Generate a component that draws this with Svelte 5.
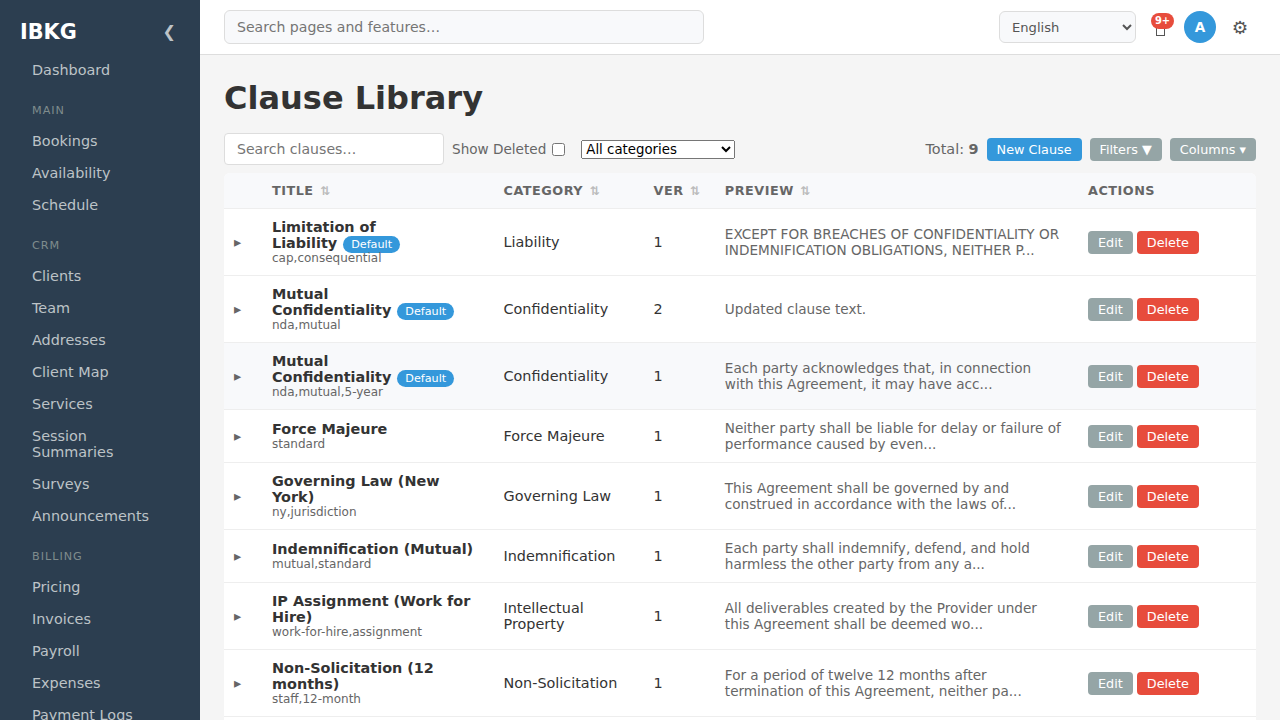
<script lang="ts">
    type Clause = {
        title: string
        tags: string
        category: string
        version: number
        preview: string
        isDefault?: boolean
        active?: boolean
    }

    const navGroups = [
        { label: '', items: ['Dashboard'] },
        { label: 'Main', items: ['Bookings', 'Availability', 'Schedule'] },
        {
            label: 'CRM',
            items: ['Clients', 'Team', 'Addresses', 'Client Map', 'Services', 'Session Summaries', 'Surveys', 'Announcements']
        },
        { label: 'Billing', items: ['Pricing', 'Invoices', 'Payroll', 'Expenses', 'Payment Logs'] }
    ]

    const columns = ['Title', 'Category', 'Ver', 'Preview']

    const clauses: Clause[] = [
        { title: 'Limitation of Liability', tags: 'cap,consequential', category: 'Liability', version: 1, preview: 'EXCEPT FOR BREACHES OF CONFIDENTIALITY OR INDEMNIFICATION OBLIGATIONS, NEITHER P...', isDefault: true },
        { title: 'Mutual Confidentiality', tags: 'nda,mutual', category: 'Confidentiality', version: 2, preview: 'Updated clause text.', isDefault: true },
        { title: 'Mutual Confidentiality', tags: 'nda,mutual,5-year', category: 'Confidentiality', version: 1, preview: 'Each party acknowledges that, in connection with this Agreement, it may have acc...', isDefault: true, active: true },
        { title: 'Force Majeure', tags: 'standard', category: 'Force Majeure', version: 1, preview: 'Neither party shall be liable for delay or failure of performance caused by even...' },
        { title: 'Governing Law (New York)', tags: 'ny,jurisdiction', category: 'Governing Law', version: 1, preview: 'This Agreement shall be governed by and construed in accordance with the laws of...' },
        { title: 'Indemnification (Mutual)', tags: 'mutual,standard', category: 'Indemnification', version: 1, preview: 'Each party shall indemnify, defend, and hold harmless the other party from any a...' },
        { title: 'IP Assignment (Work for Hire)', tags: 'work-for-hire,assignment', category: 'Intellectual Property', version: 1, preview: 'All deliverables created by the Provider under this Agreement shall be deemed wo...' },
        { title: 'Non-Solicitation (12 months)', tags: 'staff,12-month', category: 'Non-Solicitation', version: 1, preview: 'For a period of twelve 12 months after termination of this Agreement, neither pa...' }
    ]

    let search = $state('')
    let showDeleted = $state(false)
</script>

<div class="layout">
    <aside class="sidebar">
        <div class="brand">
            <span class="logo">IBKG</span>
            <button class="collapse" aria-label="Collapse sidebar">❮</button>
        </div>
        <nav>
            {#each navGroups as group}
                {#if group.label}
                    <div class="nav-label">{group.label}</div>
                {/if}
                {#each group.items as item}
                    <a class="nav-item" href="#top">{item}</a>
                {/each}
            {/each}
        </nav>
    </aside>

    <div class="content">
        <header class="topbar">
            <input class="global-search" type="text" placeholder="Search pages and features…" />
            <div class="topbar-right">
                <select class="language" aria-label="Language">
                    <option>English</option>
                </select>
                <button class="icon-btn bell" aria-label="Notifications">
                    <svg width="9" height="14" viewBox="0 0 9 14">
                        <rect x="0.5" y="0.5" width="8" height="13" fill="none" stroke="currentColor" />
                    </svg>
                    <span class="count">9+</span>
                </button>
                <div class="avatar">A</div>
                <button class="icon-btn gear" aria-label="Settings">⚙</button>
            </div>
        </header>

        <main>
            <h1>Clause Library</h1>

            <div class="toolbar">
                <input class="search" type="text" placeholder="Search clauses…" bind:value={search} />
                <label class="deleted">Show Deleted <input type="checkbox" bind:checked={showDeleted} /></label>
                <select class="category" aria-label="Category">
                    <option>All categories</option>
                </select>
                <span class="total">Total: <strong>9</strong></span>
                <button class="btn primary">New Clause</button>
                <button class="btn">Filters ▼</button>
                <button class="btn">Columns ▾</button>
            </div>

            <div class="table-wrap">
                <table>
                    <colgroup>
                        <col class="col-expand" />
                        <col class="col-title" />
                        <col class="col-category" />
                        <col class="col-version" />
                        <col class="col-preview" />
                        <col />
                    </colgroup>
                    <thead>
                        <tr>
                            <th></th>
                            {#each columns as column}
                                <th>{column} <span class="sort">⇅</span></th>
                            {/each}
                            <th>Actions</th>
                        </tr>
                    </thead>
                    <tbody>
                        {#each clauses as clause}
                            <tr class:active={clause.active}>
                                <td class="expand">▸</td>
                                <td>
                                    <strong>{clause.title}</strong>{#if clause.isDefault}<span class="badge">Default</span>{/if}
                                    <div class="tags">{clause.tags}</div>
                                </td>
                                <td>{clause.category}</td>
                                <td>{clause.version}</td>
                                <td class="preview">{clause.preview}</td>
                                <td>
                                    <div class="actions">
                                        <button class="btn">Edit</button>
                                        <button class="btn danger">Delete</button>
                                    </div>
                                </td>
                            </tr>
                        {/each}
                    </tbody>
                </table>
            </div>
        </main>
    </div>
</div>

<style>
    :global(body) {
        overflow: hidden;
        background: #f5f5f5;
        color: #333;
        font-family: 'DejaVu Sans', sans-serif;
    }

    .layout {
        display: flex;
        height: 100vh;
        overflow: hidden;
    }

    .layout * {
        box-sizing: border-box;
    }

    button, input, select {
        font-family: inherit;
    }

    .sidebar {
        flex: 0 0 200px;
        background: #2c3e50;
        overflow: hidden;
    }

    .brand {
        display: flex;
        align-items: center;
        justify-content: space-between;
        height: 54px;
        padding: 10px 20px 0;
    }

    .logo {
        color: #fff;
        font-size: 20.8px;
        font-weight: bold;
    }

    .collapse {
        padding: 3px 4px 5px;
        border: none;
        background: none;
        color: #bdc3c7;
        font-size: 16px;
    }

    .nav-label {
        padding: 18px 32px 8px;
        color: #7f8c8d;
        font-size: 11.2px;
        letter-spacing: 1px;
        text-transform: uppercase;
    }

    .nav-item {
        display: block;
        padding: 8px 32px;
        color: #bdc3c7;
        font-size: 14.4px;
        text-decoration: none;
    }

    .content {
        flex: 1;
        min-width: 0;
    }

    .topbar {
        display: flex;
        align-items: center;
        justify-content: space-between;
        height: 55px;
        padding: 0 24px;
        border-bottom: 1px solid #ddd;
        background: #fff;
    }

    .global-search {
        width: 480px;
        height: 34px;
        padding: 8px 12px;
        border: 1px solid #ddd;
        border-radius: 6px;
        background: #f8f9fb;
        font-size: 14.08px;
    }

    .topbar-right {
        display: flex;
        align-items: center;
        gap: 8px;
    }

    .language {
        width: 137px;
        height: 32px;
        padding: 0 8px;
        border: 1px solid #ddd;
        border-radius: 6px;
        background: #f8f9fb;
        color: #555;
        font-size: 13.12px;
    }

    .icon-btn {
        width: 32px;
        height: 32px;
        padding: 0;
        border: none;
        background: none;
        color: #555;
        font-size: 17.6px;
    }

    .gear {
        font-size: 18.4px;
    }

    .bell {
        display: flex;
        align-items: flex-end;
        justify-content: center;
        padding: 0 0 7px 1px;
        position: relative;
    }

    .count {
        position: absolute;
        top: 2px;
        right: 2px;
        width: 23px;
        height: 16px;
        border-radius: 8px;
        background: #e74c3c;
        color: #fff;
        font-size: 9.92px;
        font-weight: bold;
        line-height: 15px;
        text-align: center;
    }

    .avatar {
        width: 32px;
        height: 32px;
        border-radius: 50%;
        background: #3498db;
        color: #fff;
        font-size: 13.6px;
        font-weight: bold;
        line-height: 32px;
        text-align: center;
    }

    main {
        padding: 24px;
    }

    h1 {
        margin: 0 0 16px;
        font-size: 32px;
    }

    .toolbar {
        display: flex;
        align-items: center;
        gap: 8px;
        margin-bottom: 8px;
    }

    .search {
        width: 220px;
        height: 32px;
        padding: 0 12px;
        border: 1px solid #ddd;
        border-radius: 4px;
        background: #fff;
        font-size: 14.08px;
    }

    .deleted {
        display: flex;
        align-items: center;
        gap: 6px;
        margin-right: 8px;
        color: #666;
        font-size: 13.6px;
    }

    .deleted input {
        margin: 0;
    }

    .category {
        width: 154px;
        font-size: 13.333px;
    }

    .total {
        margin-left: auto;
        color: #666;
        font-size: 14.4px;
    }

    .btn {
        height: 23px;
        padding: 4px 10px;
        border: none;
        border-radius: 4px;
        background: #95a5a6;
        color: #fff;
        font-size: 12.8px;
        line-height: 15px;
        white-space: nowrap;
    }

    .primary {
        background: #3498db;
    }

    .danger {
        background: #e74c3c;
    }

    .table-wrap {
        min-height: 597px;
        border-radius: 6px;
        background: #fff;
        overflow: hidden;
    }

    table {
        width: 100%;
        table-layout: fixed;
        border-collapse: separate;
        border-spacing: 0;
    }

    .col-expand {
        width: 38px;
    }

    .col-title {
        width: 231.5px;
    }

    .col-category {
        width: 150px;
    }

    .col-version {
        width: 71.3px;
    }

    .col-preview {
        width: 363.2px;
    }

    th {
        height: 36px;
        padding: 0 10px;
        border-bottom: 1px solid #eee;
        background: #f8f9fb;
        color: #666;
        font-size: 12.8px;
        letter-spacing: 0.5px;
        text-align: left;
        text-transform: uppercase;
        white-space: nowrap;
    }

    .sort {
        margin-left: 1.6px;
        color: #bbb;
        font-size: 12px;
    }

    td {
        padding: 10px;
        border-bottom: 1px solid #eee;
        font-size: 14.4px;
        vertical-align: middle;
    }

    .active td {
        background: #f8f9fb;
    }

    .expand {
        color: #666;
    }

    .badge {
        margin-left: 6px;
        padding: 2px 8px;
        border-radius: 10px;
        background: #3498db;
        color: #fff;
        font-size: 11.2px;
    }

    .tags {
        color: #666;
        font-size: 12px;
    }

    .preview {
        padding-right: 16px;
        color: #666;
        font-size: 13.6px;
    }

    .actions {
        display: flex;
        gap: 4px;
    }
</style>
